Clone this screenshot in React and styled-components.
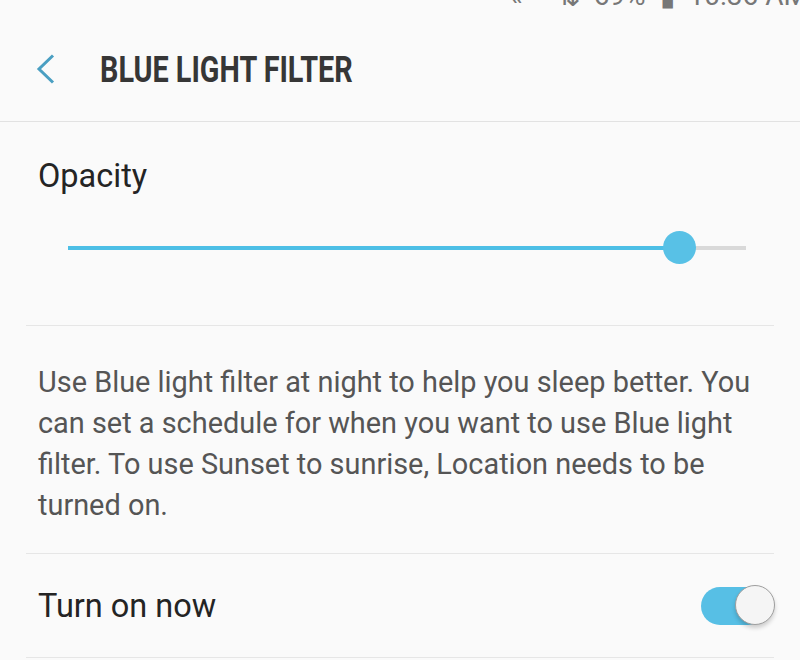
import React from "react";
import styled, { createGlobalStyle } from "styled-components";

const Global = createGlobalStyle`
  html, body { margin: 0; padding: 0; background: #fafafa; }
  body { font-family: Roboto, "Noto Sans", sans-serif; }
`;

const Screen = styled.div`
  width: 800px;
  height: 660px;
  background: #fafafa;
  overflow: hidden;
  display: flex;
  flex-direction: column;
`;

const StatusBar = styled.div`
  height: 9px;
  flex: none;
  overflow: hidden;
  display: flex;
  align-items: flex-end;
  justify-content: flex-end;
  gap: 14px;
  color: #777;
  font-size: 28px;
  line-height: 28px;
`;

const StatusItem = styled.span`
  display: block;
  margin-bottom: -1px;
  white-space: nowrap;
`;

const Header = styled.div`
  height: 113px;
  flex: none;
  box-sizing: border-box;
  border-bottom: 1px solid #e2e2e2;
  display: flex;
  align-items: center;
  padding-left: 36px;
  padding-top: 9px;
`;

const BackButton = styled.div`
  width: 64px;
  display: flex;
  align-items: center;
  margin-top: -2px;
`;

const Title = styled.h1`
  margin: 0;
  font-family: Roboto, sans-serif;
  font-weight: 700;
  font-size: 36px;
  color: #363636;
  transform: scaleX(0.8);
  transform-origin: left center;
  white-space: nowrap;
`;

const Section = styled.div`
  margin: 0 26px;
  flex: none;
  border-bottom: 1px solid #e6e6e6;
  box-sizing: border-box;
  height: ${(p) => p.$h}px;
  padding: ${(p) => p.$pad};
`;

const Label = styled.div`
  font-size: 32.5px;
  color: #242424;
  line-height: 36px;
`;

const SliderWrap = styled.div`
  position: relative;
  margin: 37px 28px 0 30px;
  height: 34px;
  display: flex;
  align-items: center;
`;

const Track = styled.div`
  flex: 1;
  height: 4px;
  background: #d9d9d9;
  position: relative;
`;

const Fill = styled.div`
  height: 100%;
  background: #4dbfe6;
`;

const Thumb = styled.div`
  position: absolute;
  top: 50%;
  width: 33px;
  height: 33px;
  margin: -17px 0 0 -16px;
  border-radius: 50%;
  background: #58c1e6;
`;

const Description = styled.p`
  margin: 0;
  font-size: 28.9px;
  line-height: 41px;
  color: #555;
`;

const Row = styled.div`
  display: flex;
  align-items: center;
  justify-content: space-between;
  height: 100%;
`;

const Toggle = styled.div`
  position: relative;
  width: 66px;
  height: 38px;
  border-radius: 19px;
  background: #57bfe5;
  margin-right: 7px;
`;

const Knob = styled.div`
  position: absolute;
  right: -8px;
  top: -2px;
  width: 40px;
  height: 40px;
  box-sizing: border-box;
  border-radius: 50%;
  background: #f5f5f5;
  border: 1.5px solid #9e9e9e;
  box-shadow: 0 3px 4px rgba(0, 0, 0, 0.18);
`;

export default function App() {
  const value = 0.901;
  return (
    <Screen>
      <Global />
      <StatusBar>
        <StatusItem style={{ marginRight: 20 }}>«</StatusItem>
        <StatusItem>⇅</StatusItem>
        <StatusItem>69%</StatusItem>
        <StatusItem>▮</StatusItem>
        <StatusItem style={{ marginRight: -8 }}>10:36 AM</StatusItem>
      </StatusBar>
      <Header>
        <BackButton>
          <svg width="20" height="30" viewBox="0 0 20 30">
            <path d="M17 1.5 L3 15 L17 28.5" fill="none" stroke="#4a9fc2" strokeWidth="3" />
          </svg>
        </BackButton>
        <Title>BLUE LIGHT FILTER</Title>
      </Header>
      <Section $h={204} $pad="36px 0 0 12px">
        <Label>Opacity</Label>
        <SliderWrap>
          <Track>
            <Fill style={{ width: `${value * 100}%` }} />
          </Track>
          <Thumb style={{ left: `${value * 100}%` }} />
        </SliderWrap>
      </Section>
      <Section $h={228} $pad="36px 0 0 12px">
        <Description>
          Use Blue light filter at night to help you sleep better. You can set a schedule for when you want to use Blue light filter. To use Sunset to sunrise, Location needs to be turned on.
        </Description>
      </Section>
      <Section $h={104} $pad="0 0 0 12px">
        <Row>
          <Label>Turn on now</Label>
          <Toggle>
            <Knob />
          </Toggle>
        </Row>
      </Section>
    </Screen>
  );
}
